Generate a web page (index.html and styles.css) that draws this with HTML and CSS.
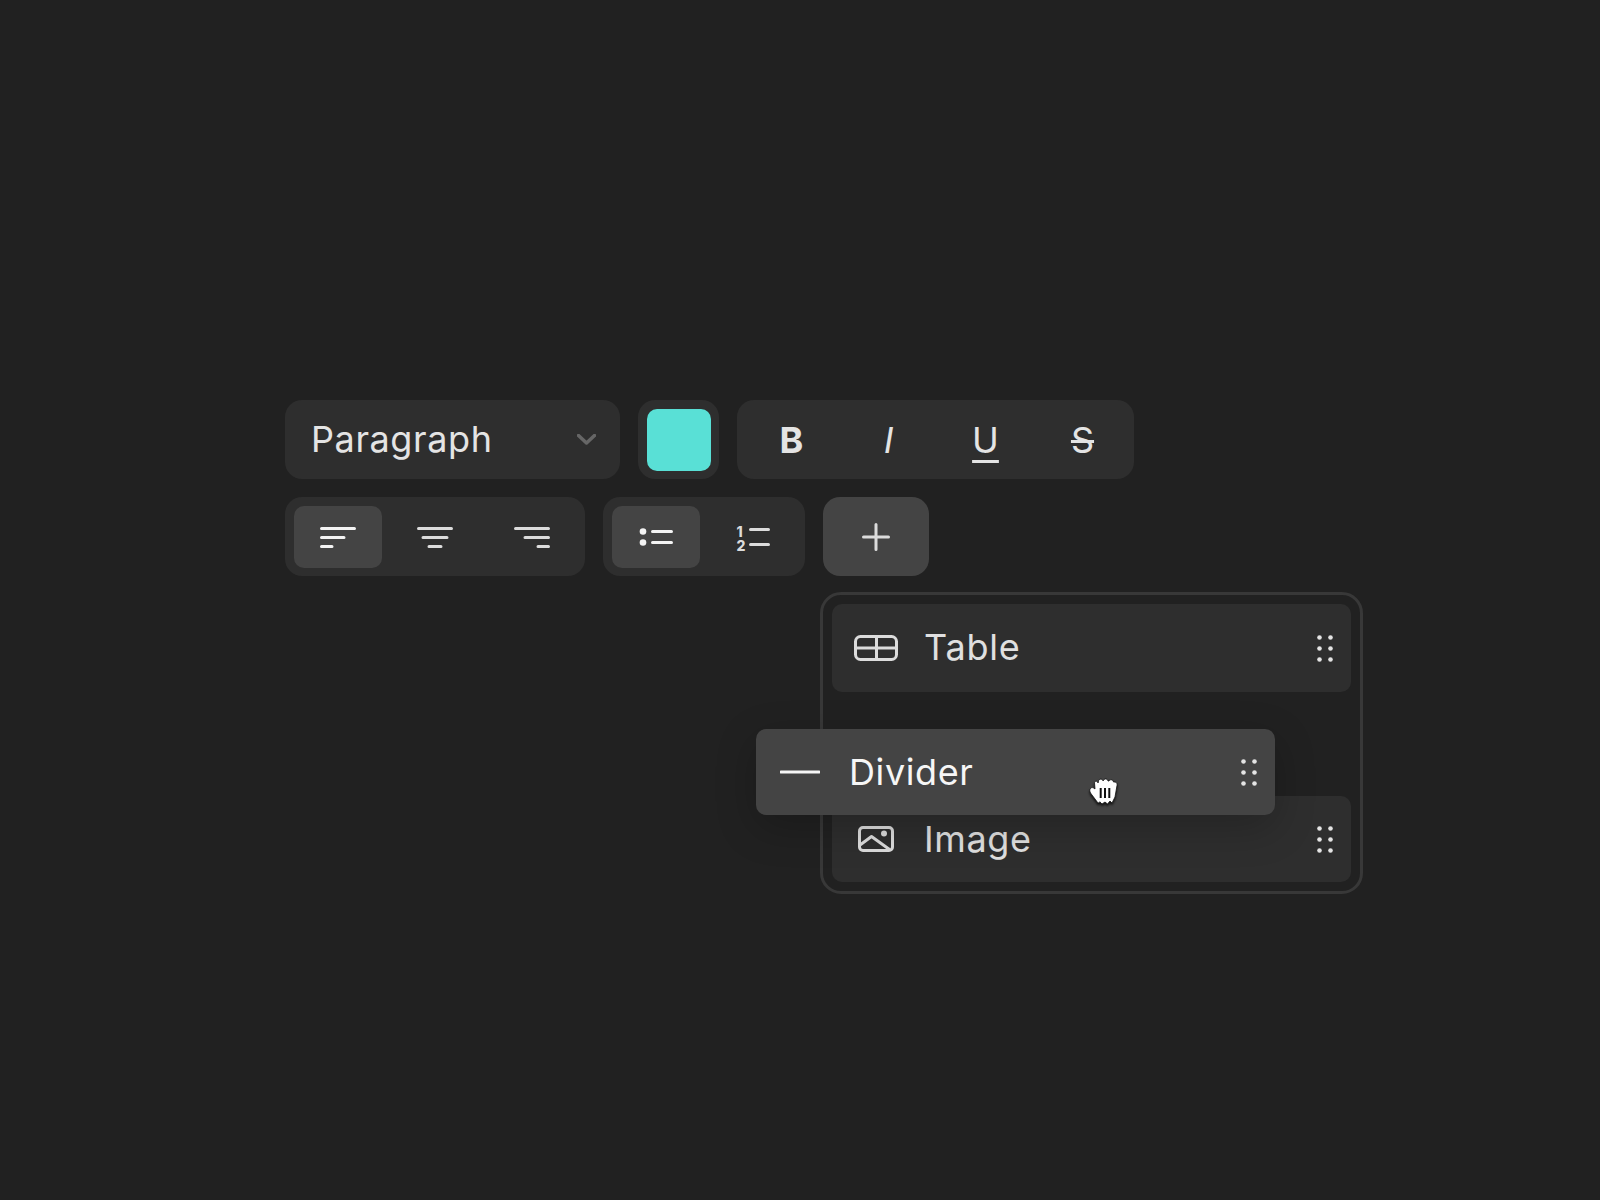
FILE: index.html
```html
<!DOCTYPE html>
<html lang="en">

<head>
    <meta charset="UTF-8">
    <title>Editor toolbar</title>
    <link rel="stylesheet" href="styles.css">
</head>

<body>
    <div class="editor">
        <div class="toolbar-row">
            <div class="group select-group">
                <span class="select-label">Paragraph</span>
                <svg class="chevron" width="19" height="11" viewBox="0 0 19 11">
                    <path d="M1.5 1.5 9.5 9 17.5 1.5" />
                </svg>
            </div>
            <div class="group swatch-group">
                <div class="swatch"></div>
            </div>
            <div class="group">
                <div class="tool"><span class="mark-bold">B</span></div>
                <div class="tool"><span class="mark-italic">I</span></div>
                <div class="tool"><span class="mark-underline">U</span></div>
                <div class="tool"><span class="mark-strike">S</span></div>
            </div>
        </div>

        <div class="toolbar-row">
            <div class="group">
                <div class="tool active">
                    <svg class="icon-bright" width="36" height="22" viewBox="0 0 36 22">
                        <path d="M1.5 2.5H34.5M1.5 11.5H24M1.5 20.5H12" />
                    </svg>
                </div>
                <div class="tool">
                    <svg width="36" height="22" viewBox="0 0 36 22">
                        <path d="M1.5 2.5H34.5M6 11.5H30M12 20.5H24" />
                    </svg>
                </div>
                <div class="tool">
                    <svg width="36" height="22" viewBox="0 0 36 22">
                        <path d="M1.5 2.5H34.5M11 11.5H34.5M24 20.5H34.5" />
                    </svg>
                </div>
            </div>
            <div class="group list-group">
                <div class="tool active">
                    <svg class="icon-bright" width="34" height="18" viewBox="0 0 34 18">
                        <circle class="dot" cx="4" cy="3.5" r="3.3" />
                        <circle class="dot" cx="4" cy="14.5" r="3.3" />
                        <path d="M13.5 3.5H32.5M13.5 14.5H32.5" />
                    </svg>
                </div>
                <div class="tool">
                    <svg class="number-icon" width="36" height="32" viewBox="-1 0 36 32">
                        <text class="list-number" x="1.5" y="16">1</text>
                        <text class="list-number" x="1.5" y="29.5">2</text>
                        <path d="M15.5 8.5H33.5M15.5 23.5H33.5" />
                    </svg>
                </div>
            </div>
            <div class="add-button">
                <svg width="28" height="28" viewBox="0 0 28 28">
                    <path d="M14 1.5V26.5M1.5 14H26.5" />
                </svg>
            </div>
        </div>

        <div class="block-panel">
            <div class="block-row table-row">
                <div class="block-icon">
                    <svg width="44" height="26" viewBox="0 0 44 26">
                        <rect x="1.5" y="1.5" width="41" height="23" rx="5" />
                        <path d="M1.5 13H42.5M22.5 1.5V24.5" />
                    </svg>
                </div>
                <span class="block-name">Table</span>
                <svg class="grip" width="16" height="27" viewBox="0 0 16 27">
                    <circle cx="2.5" cy="2.5" r="2.3" /><circle cx="13.5" cy="2.5" r="2.3" />
                    <circle cx="2.5" cy="13.5" r="2.3" /><circle cx="13.5" cy="13.5" r="2.3" />
                    <circle cx="2.5" cy="24.5" r="2.3" /><circle cx="13.5" cy="24.5" r="2.3" />
                </svg>
            </div>

            <div class="block-row image-row">
                <div class="block-icon">
                    <svg width="36" height="26" viewBox="0 0 36 26">
                        <rect x="1.5" y="1.5" width="33" height="23" rx="3.5" />
                        <path d="M2 19 13.5 10.5 31.5 23.5" />
                        <circle class="dot" cx="26" cy="7.5" r="3" />
                    </svg>
                </div>
                <span class="block-name">Image</span>
                <svg class="grip" width="16" height="27" viewBox="0 0 16 27">
                    <circle cx="2.5" cy="2.5" r="2.3" /><circle cx="13.5" cy="2.5" r="2.3" />
                    <circle cx="2.5" cy="13.5" r="2.3" /><circle cx="13.5" cy="13.5" r="2.3" />
                    <circle cx="2.5" cy="24.5" r="2.3" /><circle cx="13.5" cy="24.5" r="2.3" />
                </svg>
            </div>

            <div class="block-row dragging">
                <div class="block-icon">
                    <svg width="40" height="4" viewBox="0 0 40 4">
                        <path d="M1 2H39" />
                    </svg>
                </div>
                <span class="block-name">Divider</span>
                <svg class="grip" width="16" height="27" viewBox="0 0 16 27">
                    <circle cx="2.5" cy="2.5" r="2.3" /><circle cx="13.5" cy="2.5" r="2.3" />
                    <circle cx="2.5" cy="13.5" r="2.3" /><circle cx="13.5" cy="13.5" r="2.3" />
                    <circle cx="2.5" cy="24.5" r="2.3" /><circle cx="13.5" cy="24.5" r="2.3" />
                </svg>
            </div>

            <svg class="grab-cursor" width="34" height="32" viewBox="0 0 34 32">
                <path class="hand" d="M11 26 5 18C3 15.5 2 13 3.5 11.5 4.5 10 6.5 10.5 8 12L7.5 6C7.5 3.8 10.5 3.5 11 6L11.5 4C12 1.5 15.5 1.5 16 4L16.5 3.5C17.5 1.2 20.5 1.5 21 4L22 4C23 2 26 2.5 26.5 5L28 5C29.5 5 30.5 6.5 30 8.5L28 20 25 26 23 24 20.5 27 18 25 15 27 13 25Z" />
                <path class="hand-lines" d="M13.7 11V21M18 11V21M22.3 11V21" />
            </svg>
        </div>
    </div>
</body>

</html>
```

FILE: styles.css
```css
* {
    box-sizing: border-box;
}

body {
    font-family: Inter, "Noto Sans", sans-serif;
    background-color: #212121;
    margin: 0;
    padding: 0;
    color: #e4e4e4;
    min-height: 1200px;
}

.editor {
    padding: 400px 0 0 285px;
    display: flex;
    flex-direction: column;
    gap: 18px;
}

.toolbar-row {
    display: flex;
    gap: 18px;
}

svg path,
svg rect {
    fill: none;
    stroke: #dcdcdc;
    stroke-width: 3px;
    stroke-linecap: round;
    stroke-linejoin: round;
}

svg .dot {
    fill: #dcdcdc;
}

.group {
    display: flex;
    gap: 9px;
    height: 79px;
    padding: 9px 9px 8px;
    background-color: #2e2e2e;
    border-radius: 17px;
}

.list-group {
    width: 202px;
}

.swatch-group {
    padding-right: 8px;
}

.select-group {
    width: 335px;
    padding: 0 24px 0 26px;
    align-items: center;
    justify-content: space-between;
}

.select-label {
    padding-bottom: 2px;
    font-size: 36px;
    letter-spacing: 0.6px;
    color: #e4e4e4;
}

.chevron path {
    stroke: #666666;
    stroke-width: 3.5px;
}

.swatch {
    width: 64px;
    height: 62px;
    background-color: #59e0d6;
    border-radius: 10px;
}

.tool {
    display: flex;
    align-items: center;
    justify-content: center;
    width: 88px;
    height: 62px;
    border-radius: 10px;
    font-size: 36px;
    line-height: 1;
    color: #e4e4e4;
}

.tool span {
    margin-left: 3px;
}

.tool.active {
    background-color: #444444;
}

.icon-bright path {
    stroke: #f4f4f4;
}

.icon-bright .dot {
    fill: #f4f4f4;
}

.mark-bold {
    font-weight: 700;
}

.mark-italic {
    font-style: italic;
    font-weight: 400;
}

.mark-underline {
    text-decoration: underline;
    text-decoration-thickness: 3px;
    text-underline-offset: 7px;
}

.mark-strike {
    text-decoration: line-through;
    text-decoration-thickness: 3px;
}

.number-icon {
    flex-shrink: 0;
}

.list-number {
    font-size: 14px;
    font-weight: 800;
    fill: #dcdcdc;
}

.add-button {
    display: flex;
    align-items: center;
    justify-content: center;
    width: 106px;
    height: 79px;
    background-color: #444444;
    border-radius: 17px;
}

.block-panel {
    position: relative;
    display: flex;
    flex-direction: column;
    width: 543px;
    height: 302px;
    margin: -2px 0 0 535px;
    padding: 9px;
    border: 3px solid #383838;
    border-radius: 21px;
}

.block-row {
    display: flex;
    align-items: center;
    height: 88px;
    padding: 0 18px 0 22px;
    background-color: #2e2e2e;
    border-radius: 10px;
}

.table-row .block-name {
    padding-bottom: 2px;
    letter-spacing: 0.8px;
}

.image-row {
    height: 86px;
    margin-top: 104px;
}

.block-icon {
    display: flex;
    align-items: center;
    justify-content: center;
    width: 44px;
    margin-right: 26px;
}

.block-name {
    flex: 1;
    font-size: 36px;
    letter-spacing: 0.6px;
    color: #e0e0e0;
}

.grip circle {
    fill: #e4e4e4;
}

.dragging {
    position: absolute;
    left: -67px;
    top: 134px;
    width: 519px;
    height: 86px;
    background-color: #444444;
    box-shadow: 0 12px 40px rgba(0, 0, 0, 0.22);
}

.dragging .block-icon {
    margin-right: 27px;
}

.dragging .block-name {
    color: #f6f6f6;
}

.dragging path {
    stroke: #f6f6f6;
}

.grab-cursor {
    position: absolute;
    left: 264px;
    top: 182px;
    filter: drop-shadow(0 2px 1px rgba(0, 0, 0, 0.7));
}

.grab-cursor .hand {
    fill: #ffffff;
    stroke: #111111;
    stroke-width: 0.8px;
}

.grab-cursor .hand-lines {
    stroke: #111111;
    stroke-width: 2px;
    stroke-linecap: butt;
}
```
